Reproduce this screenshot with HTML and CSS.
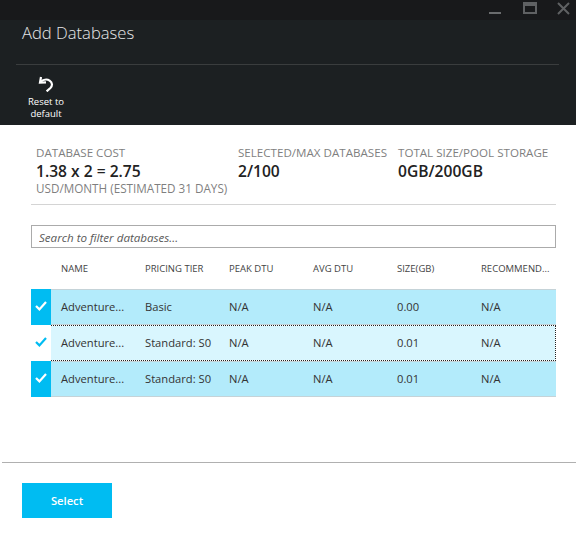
FILE: index.html
```html
<!DOCTYPE html>
<html lang="en">
<head>
    <meta charset="UTF-8">
    <title>Add Databases</title>
    <link rel="stylesheet" href="styles.css">
</head>
<body>
    <div class="titlebar">
        <span class="win-min"></span>
        <span class="win-max"></span>
        <svg class="win-close" width="13" height="13" viewBox="0 0 13 13">
            <path d="M1 1 L12 12 M12 1 L1 12" stroke="#5f6163" stroke-width="2" fill="none"/>
        </svg>
    </div>

    <div class="header">
        <h1>Add Databases</h1>
        <div class="toolbar">
            <div class="tool">
                <svg width="16" height="16" viewBox="0 0 16 16">
                    <path d="M3 1 L2 6.6 L8 6.4" stroke="#fff" stroke-width="2.2" fill="none"/>
                    <path d="M2.4 6 C5 3.6 9 3 11.6 4.6 C14.6 6.6 14.6 9.8 12.4 12 L8.6 15.4" stroke="#fff" stroke-width="2.2" fill="none"/>
                </svg>
                <span>Reset to default</span>
            </div>
        </div>
    </div>

    <div class="content">
        <div class="stats">
            <div class="stat stat-cost">
                <div class="stat-label">DATABASE COST</div>
                <div class="stat-value">1.38 x 2 = 2.75</div>
                <div class="stat-label stat-note">USD/MONTH (ESTIMATED 31 DAYS)</div>
            </div>
            <div class="stat stat-selected">
                <div class="stat-label">SELECTED/MAX DATABASES</div>
                <div class="stat-value">2/100</div>
            </div>
            <div class="stat">
                <div class="stat-label">TOTAL SIZE/POOL STORAGE</div>
                <div class="stat-value">0GB/200GB</div>
            </div>
        </div>

        <input class="search" type="text" placeholder="Search to filter databases...">

        <div class="grid-head">
            <div class="check"></div>
            <div class="cell">NAME</div>
            <div class="cell">PRICING TIER</div>
            <div class="cell">PEAK DTU</div>
            <div class="cell">AVG DTU</div>
            <div class="cell">SIZE(GB)</div>
            <div class="cell">RECOMMEND...</div>
        </div>

        <div class="grid-row">
            <div class="check"><svg width="12" height="10" viewBox="0 0 12 10"><path d="M1 5 L4.4 8.4 L11 1" stroke="#fff" stroke-width="2.2" fill="none"/></svg></div>
            <div class="cell">Adventure...</div>
            <div class="cell">Basic</div>
            <div class="cell">N/A</div>
            <div class="cell">N/A</div>
            <div class="cell">0.00</div>
            <div class="cell">N/A</div>
        </div>
        <div class="grid-row focused">
            <div class="check"><svg width="12" height="10" viewBox="0 0 12 10"><path d="M1 5 L4.4 8.4 L11 1" stroke="#00bcf2" stroke-width="2.2" fill="none"/></svg></div>
            <div class="cell">Adventure...</div>
            <div class="cell">Standard: S0</div>
            <div class="cell">N/A</div>
            <div class="cell">N/A</div>
            <div class="cell">0.01</div>
            <div class="cell">N/A</div>
        </div>
        <div class="grid-row">
            <div class="check"><svg width="12" height="10" viewBox="0 0 12 10"><path d="M1 5 L4.4 8.4 L11 1" stroke="#fff" stroke-width="2.2" fill="none"/></svg></div>
            <div class="cell">Adventure...</div>
            <div class="cell">Standard: S0</div>
            <div class="cell">N/A</div>
            <div class="cell">N/A</div>
            <div class="cell">0.01</div>
            <div class="cell">N/A</div>
        </div>
    </div>

    <div class="footer">
        <button class="select-btn">Select</button>
    </div>
</body>
</html>
```

FILE: styles.css
```css
html, body {
    height: 100%;
}
body {
    margin: 0;
    background-color: #fff;
    font-family: "Open Sans", "Noto Sans", sans-serif;
    overflow: hidden;
}
.titlebar {
    height: 20px;
    background-color: #18191b;
    display: flex;
    justify-content: flex-end;
    align-items: flex-start;
}
.win-min {
    width: 12px;
    height: 2px;
    margin-top: 12px;
    background-color: #6a6c6e;
}
.win-max {
    width: 14px;
    height: 12px;
    box-sizing: border-box;
    margin: 2px 0 0 22px;
    border: 2px solid #5f6163;
    border-top-width: 4px;
}
.win-close {
    margin: 2px 6px 0 20px;
}
.header {
    height: 105px;
    background-color: #1c2022;
    padding: 0 17px 0 16px;
    box-sizing: border-box;
}
h1 {
    margin: 0;
    height: 45px;
    box-sizing: border-box;
    padding: 1px 0 0 6px;
    border-bottom: 1px solid #3a3d3e;
    color: #e6e7e8;
    font-size: 16.6px;
    font-weight: 300;
    line-height: 24px;
}
.toolbar {
    display: flex;
    padding-top: 11px;
}
.tool {
    width: 60px;
    display: flex;
    flex-direction: column;
    align-items: center;
    color: #fff;
    font-size: 9.5px;
    line-height: 12px;
    text-align: center;
}
.tool svg {
    margin-bottom: 4px;
}
.tool span {
    width: 44px;
}
.content {
    padding: 20px 20px 0 31px;
}
.stats {
    display: flex;
    height: 59px;
    padding-left: 5px;
    border-bottom: 1px solid #d4d4d4;
}
.stat-cost {
    width: 202px;
}
.stat-selected {
    width: 160px;
}
.stat-label {
    color: #7f7f7f;
    font-size: 11.6px;
    line-height: 16px;
    white-space: nowrap;
}
.stat-note {
    margin-top: -2px;
    font-size: 11.7px;
}
.stat-value {
    color: #222;
    font-size: 15.6px;
    font-weight: 600;
    line-height: 21px;
}
.search {
    display: block;
    width: 100%;
    height: 23px;
    box-sizing: border-box;
    margin-top: 20px;
    padding: 1px 7px 0;
    border: 1px solid #ababab;
    font-family: inherit;
    font-size: 11.6px;
    font-style: italic;
    outline: none;
}
.search::placeholder {
    color: #595959;
    opacity: 1;
}
.grid-head {
    display: flex;
    height: 41px;
    font-size: 9.5px;
    color: #444;
    align-items: center;
}
.grid-row {
    display: flex;
    height: 36px;
    box-sizing: border-box;
    align-items: center;
    background-color: #b3ebfb;
    border-top: 1px solid #c5d3d8;
    border-bottom: 1px solid #c5d3d8;
    color: #333;
    font-size: 11.2px;
}
.grid-row .cell {
    padding-bottom: 2px;
}
.check {
    width: 20px;
    height: 100%;
    margin-right: 10px;
    flex: none;
    display: flex;
    align-items: center;
    justify-content: center;
}
.grid-row .check {
    background-color: #00bcf2;
    margin-top: -1px;
    margin-bottom: -1px;
    height: 36px;
}
.grid-row .check svg {
    margin-bottom: 2px;
}
.cell {
    width: 84px;
    flex: none;
    white-space: nowrap;
}
.grid-row.focused {
    background-color: #d9f6fe;
    background-clip: padding-box;
    border-top: 1px dotted #222;
    border-bottom: 1px dotted #222;
    border-right: 1px dotted #222;
}
.grid-row.focused .check {
    background-color: #fff;
}
.footer {
    margin-top: 65px;
    margin-left: 2px;
    border-top: 1px solid #b0b0b0;
    padding: 20px 0 0 20px;
}
.select-btn {
    width: 90px;
    height: 35px;
    border: none;
    background-color: #00bcf2;
    color: #fff;
    font-family: inherit;
    font-size: 11.2px;
    font-weight: 600;
    padding: 0;
}
```
